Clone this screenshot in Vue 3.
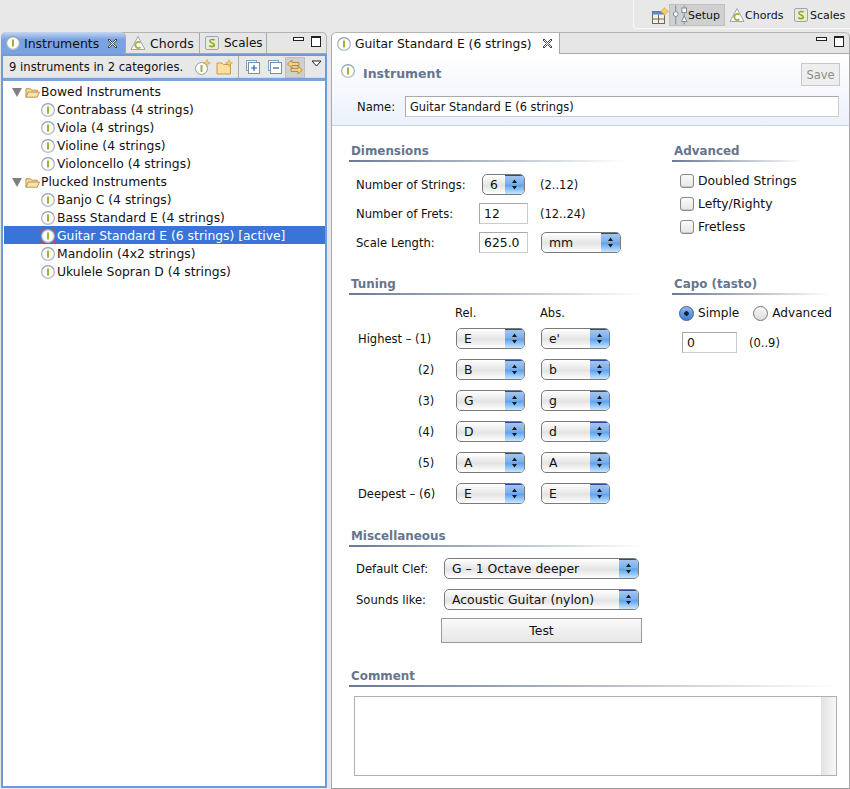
<script setup>
const tree = [
  {
    name: 'Bowed Instruments',
    items: ['Contrabass (4 strings)', 'Viola (4 strings)', 'Violine (4 strings)', 'Violoncello (4 strings)'],
  },
  {
    name: 'Plucked Instruments',
    items: ['Banjo C (4 strings)', 'Bass Standard E (4 strings)', 'Guitar Standard E (6 strings) [active]', 'Mandolin (4x2 strings)', 'Ukulele Sopran D (4 strings)'],
  },
];
const tuning = [
  { label: 'Highest – (1)', rel: 'E', abs: "e'" },
  { label: '(2)', rel: 'B', abs: 'b' },
  { label: '(3)', rel: 'G', abs: 'g' },
  { label: '(4)', rel: 'D', abs: 'd' },
  { label: '(5)', rel: 'A', abs: 'A' },
  { label: 'Deepest – (6)', rel: 'E', abs: 'E' },
];
</script>

<template>
  <div class="app">
    <svg class="sprite" width="0" height="0">
      <defs>
        <linearGradient id="ring" x1="0" y1="0" x2="0" y2="1">
          <stop offset="0" stop-color="#8d9db5" />
          <stop offset="1" stop-color="#b5bfcc" />
        </linearGradient>
        <symbol id="i-instr" viewBox="0 0 16 16">
          <circle cx="8" cy="8" r="6.4" fill="#fdfdf8" stroke="url(#ring)" stroke-width="1.2" />
          <rect x="7" y="4.5" width="2" height="7" fill="#9db33a" />
        </symbol>
        <symbol id="i-instr-active" viewBox="0 0 16 16">
          <circle cx="8" cy="8" r="6.4" fill="#fdfdf8" stroke="url(#ring)" stroke-width="1.2" />
          <rect x="7" y="4.5" width="2" height="7" fill="#9db33a" />
          <path d="M1 5 V2.5 L2.5 1 H5 M11 1 H13.5 L15 2.5 V5 M15 11 V13.5 L13.5 15 H11 M5 15 H2.5 L1 13.5 V11" fill="none" stroke="#e8402f" stroke-width="1.1" />
        </symbol>
        <symbol id="i-chord" viewBox="0 0 16 16">
          <path d="M8 1.5 L15 14.5 H1 Z" fill="#fbfbf4" stroke="#9aa6b8" stroke-width="1" />
          <path d="M10.4 7.8 A3 3 0 1 0 10.4 12.2" fill="none" stroke="#9db33a" stroke-width="1.7" />
        </symbol>
        <symbol id="i-scale" viewBox="0 0 16 16">
          <rect x="1.5" y="1.5" width="13" height="13" rx="1.5" fill="#e9ecd2" stroke="#97a6bd" />
          <path d="M10.6 5.3 C9.5 4 5.8 4.2 5.9 6.2 C6 8.2 10.4 7.6 10.4 9.9 C10.4 12 6.4 12 5.3 10.6" fill="none" stroke="#8ea32c" stroke-width="1.6" />
        </symbol>
        <symbol id="i-folder" viewBox="0 0 16 16">
          <path d="M1 13 V4 H6 L7 5.5 H13 V8" fill="#f7dca0" stroke="#b98f46" />
          <path d="M1 13 L3.5 7.5 H15.5 L13 13 Z" fill="#fbe3ac" stroke="#b98f46" />
        </symbol>
        <symbol id="i-spinner" viewBox="0 0 9 13">
          <path d="M4.5 1.5 L7 5 H2 Z M4.5 11.5 L2 8 H7 Z" fill="#1a1a1a" />
        </symbol>
      </defs>
    </svg>

    <header class="perspectives">
      <div class="persp-well">
        <svg class="persp-open" width="18" height="18" viewBox="0 0 18 18">
          <rect x="1.5" y="4.5" width="12" height="12" fill="#f4f1e4" stroke="#6d6a5e" />
          <rect x="1.5" y="4.5" width="12" height="3" fill="#5c8ad0" />
          <path d="M7.5 7.5 V16.5 M1.5 12 H13.5" stroke="#6d6a5e" />
          <path d="M13.5 0.5 L15 3 L17.5 4.5 L15 6 L13.5 8.5 L12 6 L9.5 4.5 L12 3 Z" fill="#f7d25c" stroke="#c9973a" stroke-width=".6" />
        </svg>
        <div class="persp-btn is-active">
          <svg width="17" height="20" viewBox="0 0 17 20" fill="none" stroke="#78879c">
            <path d="M4 0 V6 M4 12 V20 M13 0 V2 M13 8 V11 M13 17 V20" />
            <circle cx="4" cy="9" r="2.6" fill="#f6f6ee" />
            <rect x="10.5" y="2.5" width="5" height="5" fill="#f6f6ee" />
            <path d="M13 11 L16 17 H10 Z" fill="#f6f6ee" />
          </svg>
          Setup
        </div>
        <div class="persp-btn persp-chords"><svg class="icon"><use href="#i-chord" /></svg>Chords</div>
        <div class="persp-btn"><svg class="icon"><use href="#i-scale" /></svg>Scales</div>
      </div>
    </header>

    <main class="workbench">
      <section class="view">
        <div class="tabbar">
          <div class="tab tab-active">
            <svg class="icon"><use href="#i-instr" /></svg>
            <span>Instruments</span>
            <svg class="tab-close" width="11" height="11" viewBox="0 0 11 11">
              <path d="M2 1 L5.5 4.5 L9 1 L10 2 L6.5 5.5 L10 9 L9 10 L5.5 6.5 L2 10 L1 9 L4.5 5.5 L1 2 Z" fill="#fff" stroke="#333" stroke-width=".9" />
            </svg>
          </div>
          <div class="tab tab-chords"><svg class="icon"><use href="#i-chord" /></svg><span>Chords</span></div>
          <div class="tab tab-scales"><svg class="icon"><use href="#i-scale" /></svg><span>Scales</span></div>
          <div class="win-controls">
            <i class="win-min"></i>
            <i class="win-max"></i>
          </div>
        </div>
        <div class="view-body">
          <div class="view-toolbar">
            <span class="count">9 instruments in 2 categories.</span>
            <svg class="tool tool-new" width="17" height="17" viewBox="0 0 17 17">
              <circle cx="7.5" cy="9.5" r="6" fill="#fdfdf8" stroke="#8d9db5" />
              <rect x="6.5" y="6" width="2" height="7" fill="#9db33a" />
              <path d="M13 0.5 L14 3 L16.5 4 L14 5 L13 7.5 L12 5 L9.5 4 L12 3 Z" fill="#f7d25c" stroke="#c9973a" stroke-width=".5" />
            </svg>
            <svg class="tool" width="17" height="17" viewBox="0 0 17 17">
              <path d="M1 15 V4 H6 L7.5 5.5 H14.5 V15 Z" fill="#fbdf9f" stroke="#c79a4c" />
              <path d="M13 0.5 L14 3 L16.5 4 L14 5 L13 7.5 L12 5 L9.5 4 L12 3 Z" fill="#f7d25c" stroke="#c9973a" stroke-width=".5" />
            </svg>
            <span class="tool-sep"></span>
            <svg class="tool tool-tree" width="14" height="14" viewBox="0 0 14 14">
              <rect x="0.5" y="0.5" width="10" height="10" fill="#f2f5f9" stroke="#8a9fbd" />
              <rect x="2.5" y="2.5" width="11" height="11" fill="#fff" stroke="#7890b0" />
              <path d="M5 8 H11 M8 5 V11" stroke="#2d5f9c" stroke-width="1.2" />
            </svg>
            <svg class="tool tool-tree2" width="14" height="14" viewBox="0 0 14 14">
              <rect x="0.5" y="0.5" width="10" height="10" fill="#f2f5f9" stroke="#8a9fbd" />
              <rect x="2.5" y="2.5" width="11" height="11" fill="#fff" stroke="#7890b0" />
              <path d="M5 8 H11" stroke="#2d5f9c" stroke-width="1.2" />
            </svg>
            <span class="link-btn">
              <svg width="16" height="16" viewBox="0 0 16 16">
                <path d="M0.5 5 L5 1 V3.5 H12 V6.5 H5 V9 Z" fill="#f3d27d" stroke="#b8862a" stroke-width=".9" />
                <path d="M15.5 11 L11 7 V9.5 H4 V12.5 H11 V15 Z" fill="#f3d27d" stroke="#b8862a" stroke-width=".9" />
              </svg>
            </span>
            <svg class="view-menu" width="11" height="7" viewBox="0 0 11 7">
              <path d="M1 1 H10 L5.5 6 Z" fill="#fff" stroke="#222" />
            </svg>
          </div>
          <div class="tree">
            <template v-for="group in tree" :key="group.name">
              <div class="row">
                <i class="twisty"></i>
                <svg class="folder"><use href="#i-folder" /></svg>
                <span>{{ group.name }}</span>
              </div>
              <div
                v-for="item in group.items"
                :key="item"
                class="row row-child"
                :class="{ selected: item.includes('[active]') }"
              >
                <svg class="icon"><use :href="item.includes('[active]') ? '#i-instr-active' : '#i-instr'" /></svg>
                <span>{{ item }}</span>
              </div>
            </template>
          </div>
        </div>
      </section>

      <section class="editor">
        <div class="tabbar editor-tabbar">
          <div class="tab editor-tab">
            <svg class="icon"><use href="#i-instr" /></svg>
            <span>Guitar Standard E (6 strings)</span>
            <svg class="tab-close" width="11" height="11" viewBox="0 0 11 11">
              <path d="M2 1 L5.5 4.5 L9 1 L10 2 L6.5 5.5 L10 9 L9 10 L5.5 6.5 L2 10 L1 9 L4.5 5.5 L1 2 Z" fill="#fff" stroke="#333" stroke-width=".9" />
            </svg>
          </div>
          <div class="win-controls">
            <i class="win-min"></i>
            <i class="win-max"></i>
          </div>
        </div>

        <div class="form-head">
          <div class="head-top">
            <svg class="icon"><use href="#i-instr" /></svg>
            <h1>Instrument</h1>
            <button class="save">Save</button>
          </div>
          <div class="name-row">
            <label>Name:</label>
            <div class="input name-input">Guitar Standard E (6 strings)</div>
          </div>
        </div>

        <div class="form">
          <div class="cols cols-dim">
            <div class="col-main">
              <h2 class="sec">Dimensions</h2>
              <div class="dim-row">
                <label>Number of Strings:</label>
                <div class="select sel-count"><span>6</span><i class="stepper"><svg width="9" height="13"><use href="#i-spinner" /></svg></i></div>
                <span class="hint hint-a">(2..12)</span>
              </div>
              <div class="dim-row">
                <label>Number of Frets:</label>
                <div class="input num">12</div>
                <span class="hint">(12..24)</span>
              </div>
              <div class="dim-row">
                <label>Scale Length:</label>
                <div class="input num">625.0</div>
                <div class="select sel-unit"><span>mm</span><i class="stepper"><svg width="9" height="13"><use href="#i-spinner" /></svg></i></div>
              </div>
            </div>
            <div class="col-side">
              <h2 class="sec">Advanced</h2>
              <label class="check"><i class="box"></i>Doubled Strings</label>
              <label class="check"><i class="box"></i>Lefty/Righty</label>
              <label class="check"><i class="box"></i>Fretless</label>
            </div>
          </div>

          <div class="cols cols-tuning">
            <div class="col-main">
              <h2 class="sec sec-tuning">Tuning</h2>
              <div class="tune-head"><span>Rel.</span><span>Abs.</span></div>
              <div v-for="t in tuning" :key="t.label" class="tune-row">
                <label :class="{ short: t.label.length < 4 }">{{ t.label }}</label>
                <div class="select sel-tune"><span>{{ t.rel }}</span><i class="stepper"><svg width="9" height="13"><use href="#i-spinner" /></svg></i></div>
                <div class="select sel-tune"><span>{{ t.abs }}</span><i class="stepper"><svg width="9" height="13"><use href="#i-spinner" /></svg></i></div>
              </div>
            </div>
            <div class="col-side">
              <h2 class="sec sec-capo">Capo (tasto)</h2>
              <div class="radios">
                <label class="radio"><i class="dot dot-on"></i>Simple</label>
                <label class="radio"><i class="dot"></i>Advanced</label>
              </div>
              <div class="capo-row">
                <div class="input capo">0</div>
                <span class="hint">(0..9)</span>
              </div>
            </div>
          </div>

          <h2 class="sec sec-misc">Miscellaneous</h2>
          <div class="misc-row">
            <label>Default Clef:</label>
            <div class="select sel-wide"><span>G – 1 Octave deeper</span><i class="stepper"><svg width="9" height="13"><use href="#i-spinner" /></svg></i></div>
          </div>
          <div class="misc-row">
            <label>Sounds like:</label>
            <div class="select sel-wide"><span>Acoustic Guitar (nylon)</span><i class="stepper"><svg width="9" height="13"><use href="#i-spinner" /></svg></i></div>
          </div>
          <button class="test">Test</button>

          <h2 class="sec sec-comment">Comment</h2>
          <div class="comment"><i class="comment-bar"></i></div>
        </div>
      </section>
    </main>
  </div>
</template>

<style>
html, body {
  margin: 0;
  background: #e8e8e8;
}
</style>

<style scoped>
.app {
  width: 850px;
  height: 789px;
  display: flex;
  flex-direction: column;
  overflow: hidden;
  background: #e8e8e8;
  color: #111;
  font-family: "DejaVu Sans", "Liberation Sans", sans-serif;
  font-size: 12.35px;
}
.sprite {
  position: absolute;
}
.icon {
  width: 16px;
  height: 16px;
  flex: none;
}

/* perspective bar */
.perspectives {
  height: 32px;
  flex: none;
  display: flex;
  justify-content: flex-end;
}
.persp-well {
  width: 217px;
  height: 29px;
  box-sizing: border-box;
  padding: 4px 0 0 17px;
  display: flex;
  align-items: flex-start;
  border-left: 1px solid #f8f8f8;
  border-bottom: 1px solid #f8f8f8;
  border-bottom-left-radius: 4px;
}
.persp-open {
  flex: none;
  margin-top: 3px;
}
.persp-btn {
  height: 22px;
  box-sizing: border-box;
  padding: 0 4px 0 0;
  display: flex;
  align-items: center;
  gap: 1px;
  flex: none;
  font-size: 11px;
  border: 1px solid transparent;
}
.persp-btn.is-active {
  width: 56px;
  margin-right: 3px;
  padding-left: 2px;
  gap: 0;
  background: #d0d0d0;
  border-color: #c0c0c0;
}
.persp-chords {
  width: 64px;
  gap: 0;
}

/* tabs */
.workbench {
  flex: 1;
  display: flex;
  gap: 4px;
  min-height: 0;
}
.view {
  width: 326px;
  flex: none;
  display: flex;
  flex-direction: column;
  margin-left: 1px;
  margin-bottom: 1px;
}
.tabbar {
  height: 22px;
  flex: none;
  display: flex;
  align-items: stretch;
  background: #e6e6e6;
  border: 1px solid #b4b4b4;
  border-bottom: 1px solid #a8a8a8;
  border-radius: 5px 5px 0 0;
  box-sizing: border-box;
}
.tab {
  display: flex;
  align-items: center;
  gap: 3px;
  padding: 0 4px;
  box-sizing: border-box;
  border-right: 1px solid #aaa;
  font-size: 12.5px;
}
.tab-active {
  width: 125px;
  padding-left: 4px;
  margin: -1px 0 -1px -1px;
  background: linear-gradient(#c5d6f1, #7aa1e0 35%, #7ba2e0);
  border-radius: 5px 5px 0 0;
}
.tab-chords {
  width: 74px;
  gap: 4px;
}
.tab-scales {
  width: 67px;
  gap: 4px;
  font-size: 12px;
}
.tab-close {
  margin-left: 5px;
}
.win-controls {
  margin-left: auto;
  margin-right: 5px;
  display: flex;
  align-items: flex-start;
  gap: 7px;
  padding-top: 3px;
}
.win-min {
  width: 9px;
  height: 2px;
  margin-top: 1px;
  border: 1px solid #222;
  background: #fff;
}
.win-max {
  width: 8px;
  height: 8px;
  border: 1px solid #222;
  border-top-width: 2px;
  background: #fff;
}

/* left view */
.view-body {
  flex: 1;
  min-height: 0;
  display: flex;
  flex-direction: column;
  border: 2px solid #6e9ad8;
  background: #fff;
}
.view-toolbar {
  height: 25px;
  flex: none;
  box-sizing: border-box;
  display: flex;
  align-items: center;
  padding: 0 3px 0 6px;
  background: #e8e8e8;
  border-bottom: 3px solid #7ba2dc;
  box-shadow: inset 0 -1px 0 #cfdcf0;
}
.count {
  width: 185px;
  flex: none;
  font-size: 11.6px;
}
.tool {
  flex: none;
}
.tool-new {
  margin-right: 5px;
}
.tool-sep {
  width: 1px;
  height: 22px;
  flex: none;
  background: #aaa;
  margin: 0 7px 0 5px;
}
.tool-tree {
  margin-right: 8px;
}
.tool-tree2 {
  margin-right: 3px;
}
.link-btn {
  width: 20px;
  height: 21px;
  flex: none;
  display: flex;
  align-items: center;
  justify-content: center;
  background: #d0d0d0;
  border: 1px solid #bdbdbd;
  box-sizing: border-box;
}
.view-menu {
  flex: none;
  margin: -8px 0 0 6px;
}
.tree {
  flex: 1;
  padding-top: 1px;
}
.row {
  height: 18px;
  display: flex;
  align-items: center;
  gap: 1px;
  padding-left: 9px;
}
.row > * {
  margin-top: 2px;
}
.row-child {
  padding-left: 37px;
}
.row-child.selected {
  background: #3875d7;
  color: #fff;
  margin-left: 1px;
  padding-left: 36px;
}
.twisty {
  width: 0;
  height: 0;
  border-left: 5px solid transparent;
  border-right: 5px solid transparent;
  border-top: 9px solid #808080;
  margin-right: 2px;
}
.folder {
  width: 15px;
  height: 15px;
  flex: none;
}

/* editor */
.editor {
  flex: 1;
  min-width: 0;
  display: flex;
  flex-direction: column;
  background: #fff;
  border-left: 1px solid #aaa;
  border-right: 1px solid #aaa;
  border-bottom: 1px solid #999;
  border-radius: 5px 5px 0 0;
}
.editor-tabbar {
  border-left: 0;
  border-right: 0;
}
.editor-tab {
  width: 228px;
  padding-left: 4px;
  background: #fff;
  margin-bottom: -1px;
  border-radius: 5px 0 0 0;
  font-size: 12.3px;
}
.editor-tab .tab-close {
  margin-left: 7px;
}
.form-head {
  height: 72px;
  flex: none;
  box-sizing: border-box;
  background: linear-gradient(#fff, #edf1fb);
  border-bottom: 1px solid #c5d4ee;
  padding: 9px 10px 0 8px;
}
.head-top {
  display: flex;
  align-items: flex-start;
  height: 33px;
}
h1 {
  margin: 0 0 0 7px;
  font-size: 12.5px;
  font-weight: bold;
  color: #66758f;
  line-height: 22px;
}
.save {
  margin-left: auto;
  margin-right: -1px;
  width: 39px;
  height: 23px;
  padding: 0;
  font: 11.5px "DejaVu Sans", sans-serif;
  color: #8d8d8d;
  background: #eeeeee;
  border: 1px solid #c8c8c8;
}
.name-row {
  display: flex;
  align-items: center;
  padding-left: 17px;
  font-size: 11.6px;
}
.name-row label {
  width: 48px;
}
.input {
  box-sizing: border-box;
  height: 21px;
  line-height: 20px;
  padding-left: 4px;
  background: #fff;
  border: 1px solid #aaa;
  border-bottom-color: #ccc;
  border-right-color: #ccc;
  font-size: 12.4px;
}
.name-input {
  flex: 1;
  font-size: 11.4px;
}
.form {
  flex: 1;
  padding: 0 12px 0 18px;
}
.cols {
  display: flex;
}
.cols-dim {
  height: 148px;
  padding-top: 15px;
  box-sizing: border-box;
}
.cols-tuning {
  height: 252px;
}
.col-main {
  width: 323px;
  margin-left: -1px;
}
.col-side {
  flex: 1;
}
.sec {
  margin: 0;
  height: 21px;
  box-sizing: border-box;
  padding-left: 2px;
  font-size: 11.9px;
  font-weight: bold;
  line-height: 21px;
  color: #66758f;
  background: linear-gradient(90deg, #6a7a94, #d8dce2 75%, #fff) left 19px / 100% 2px no-repeat;
}
.col-main .sec {
  width: 276px;
}
.col-main .sec-tuning {
  width: 295px;
}
.col-side .sec {
  width: 131px;
}
.col-side .sec-capo {
  width: 158px;
}
.dim-row {
  height: 29px;
  display: flex;
  align-items: center;
  padding-left: 7px;
  font-size: 11.6px;
}
.dim-row:first-of-type {
  margin-top: 8px;
}
.dim-row label {
  width: 123px;
  flex: none;
}
.hint {
  margin-left: 12px;
  font-size: 11.5px;
}
.hint-a {
  margin-left: 15px;
}
.num {
  width: 49px;
}
.select {
  box-sizing: border-box;
  height: 21px;
  display: flex;
  align-items: center;
  justify-content: space-between;
  padding-left: 7px;
  font-size: 12.4px;
  background: linear-gradient(#fff, #e9e9e9 45%, #e4e4e4 55%, #fff);
  border: 1px solid #7a7a7a;
  border-radius: 5px;
  overflow: hidden;
}
.stepper {
  width: 19px;
  align-self: stretch;
  display: flex;
  align-items: center;
  justify-content: center;
  background: linear-gradient(#a9c8ef, #7db0ec 45%, #5ea4f0 55%, #c8e6ff);
  box-shadow: inset 0 1px 0 #2a4a9a;
}
.sel-count {
  width: 43px;
  margin-left: 3px;
}
.sel-unit {
  width: 80px;
  margin-left: 13px;
}
.sel-tune {
  width: 69px;
}
.sel-wide {
  width: 195px;
}
.check {
  height: 23px;
  display: flex;
  align-items: center;
  gap: 4px;
  padding-left: 8px;
}
.check:first-of-type {
  margin-top: 7px;
}
.box {
  width: 12px;
  height: 12px;
  border: 1px solid #888;
  border-radius: 3px;
  background: linear-gradient(#fafafa, #e6e6e6);
  box-shadow: inset 0 -1px 0 #ccc;
}
.tune-head {
  height: 20px;
  margin-top: 8px;
  display: flex;
  align-items: center;
  padding-left: 106px;
  font-size: 11.5px;
}
.tune-head span {
  width: 85px;
}
.tune-row {
  height: 31px;
  display: flex;
  align-items: center;
  gap: 16px;
  margin-left: 1px;
}
.tune-row label {
  width: 90px;
  flex: none;
  box-sizing: border-box;
  padding-left: 8px;
  white-space: nowrap;
  font-size: 11.5px;
}
.tune-row label.short {
  padding-left: 68px;
}
.radios {
  display: flex;
  gap: 14px;
  padding: 8px 0 0 7px;
  height: 20px;
  font-size: 12.1px;
}
.radio {
  display: flex;
  align-items: center;
  gap: 4px;
}
.dot {
  width: 13px;
  height: 13px;
  border: 1px solid #777;
  border-radius: 50%;
  background: linear-gradient(#f8f8f8, #dcdcdc);
}
.dot-on {
  background: radial-gradient(circle, #123 0 2px, transparent 2.5px), linear-gradient(#8fb8ec, #3e7fd8);
  border-color: #3a5f94;
}
.capo-row {
  display: flex;
  align-items: center;
  padding: 9px 0 0 10px;
}
.capo {
  width: 55px;
}
.sec-misc {
  width: 295px;
  margin-left: -1px;
  margin-bottom: 6px;
}
.misc-row {
  height: 31px;
  display: flex;
  align-items: center;
  padding-left: 6px;
  font-size: 11.6px;
}
.misc-row label {
  width: 88px;
}
.test {
  display: block;
  width: 201px;
  height: 25px;
  margin: 3px 0 0 91px;
  padding: 0;
  font: 12.4px "DejaVu Sans", sans-serif;
  color: #111;
  background: linear-gradient(#fafafa, #e6e6e6);
  border: 1px solid #999;
}
.sec-comment {
  margin-top: 23px;
  margin-left: -1px;
  width: 490px;
}
.comment {
  box-sizing: border-box;
  width: 483px;
  height: 80px;
  margin: 9px 0 0 4px;
  display: flex;
  justify-content: flex-end;
  border: 1px solid #b0b0b0;
}
.comment-bar {
  width: 15px;
  background: linear-gradient(90deg, #e2e2e2, #f8f8f8);
}
</style>
